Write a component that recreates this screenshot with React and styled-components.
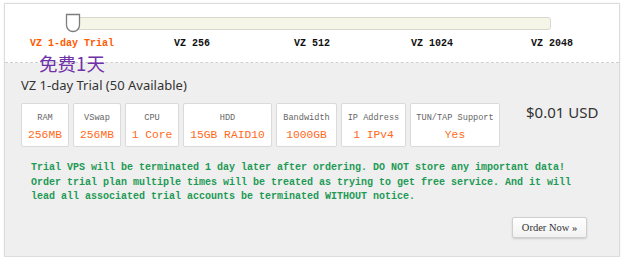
import React from "react";
import styled, { createGlobalStyle } from "styled-components";

const Global = createGlobalStyle`
  html, body { margin: 0; padding: 0; background: #fff; }
  body { font-family: "Noto Sans", "DejaVu Sans", sans-serif; }
`;

const Frame = styled.div`
  margin: 3px 0 0 4px;
  width: 614px;
  height: 252px;
  border: 1px solid #dcdcdc;
  box-shadow: 0 0 2px rgba(0,0,0,0.08);
  display: flex;
  flex-direction: column;
  background: #fff;
`;

const SliderArea = styled.div`
  height: 59px;
  flex: none;
  border-bottom: 1px dashed #cfcfcf;
  padding-top: 12px;
  box-sizing: border-box;
  position: relative;
  z-index: 1;
`;

const TrackWrap = styled.div`
  position: relative;
  margin-left: 67px;
  width: 479px;
  height: 19px;
`;

const Track = styled.div`
  position: absolute;
  left: 0;
  right: 0;
  top: 1px;
  height: 11px;
  background: #f5f5e8;
  border: 1px solid #d8d8cc;
  border-radius: 3px;
`;

const Handle = styled.svg`
  position: absolute;
  left: -7px;
  top: -3px;
`;

const Labels = styled.div`
  display: grid;
  grid-template-columns: repeat(5, 120px);
  margin-left: 7px;
  margin-top: 3px;
`;

const LabelCol = styled.div`
  display: flex;
  flex-direction: column;
  align-items: center;
`;

const StepLabel = styled.div`
  font-family: "Liberation Mono", "DejaVu Sans Mono", monospace;
  font-weight: bold;
  font-size: 10px;
  line-height: 12px;
  color: ${p => (p.$active ? "#ff5a00" : "#111")};
  white-space: nowrap;
`;

const Promo = styled.div`
  font-family: "Noto Sans CJK SC", sans-serif;
  font-size: 18.5px;
  line-height: 18px;
  color: #7030a8;
  margin-top: 4px;
`;

const Panel = styled.div`
  flex: 1;
  background: #efefef;
  padding: 14px 0 0 16px;
  display: flex;
  flex-direction: column;
`;

const Title = styled.div`
  font-size: 13px;
  line-height: 16px;
  color: #333;
`;

const SpecRow = styled.div`
  display: flex;
  align-items: flex-start;
  margin-top: 10px;
`;

const Boxes = styled.div`
  display: flex;
  gap: 4px;
`;

const Box = styled.div`
  width: ${p => p.$w}px;
  height: 44px;
  box-sizing: border-box;
  background: #fff;
  border: 1px solid #dadada;
  border-radius: 2px;
  display: flex;
  flex-direction: column;
  align-items: center;
  padding-top: 8px;
`;

const BoxLabel = styled.div`
  font-family: "Liberation Mono", "DejaVu Sans Mono", monospace;
  font-size: 8.6px;
  line-height: 12px;
  color: #666;
  white-space: nowrap;
`;

const BoxValue = styled.div`
  font-family: "Liberation Mono", "DejaVu Sans Mono", monospace;
  font-size: 11.3px;
  line-height: 14px;
  margin-top: 4px;
  color: #ff6a1a;
  white-space: nowrap;
`;

const Price = styled.div`
  margin-left: 26px;
  margin-top: 0;
  font-size: 15px;
  line-height: 18px;
  color: #333;
  white-space: nowrap;
`;

const Notice = styled.div`
  margin: 14px 0 0 10px;
  font-family: "Liberation Mono", "DejaVu Sans Mono", monospace;
  font-weight: bold;
  font-size: 10px;
  line-height: 14.5px;
  color: #1e9a55;
  white-space: pre;
`;

const Actions = styled.div`
  display: flex;
  justify-content: flex-end;
  padding-right: 32px;
  margin-top: 12px;
`;

const OrderButton = styled.button`
  width: 75px;
  height: 21px;
  border: 1px solid #cfcfcf;
  border-radius: 2px;
  background: linear-gradient(#ffffff, #f1f1f1);
  box-shadow: 0 1px 2px rgba(0,0,0,0.15);
  font-family: "Liberation Serif", serif;
  font-size: 10.5px;
  color: #333;
  padding: 0;
  cursor: pointer;
`;

const specs = [
  { label: "RAM", value: "256MB", w: 48 },
  { label: "VSwap", value: "256MB", w: 48 },
  { label: "CPU", value: "1 Core", w: 54 },
  { label: "HDD", value: "15GB RAID10", w: 89 },
  { label: "Bandwidth", value: "1000GB", w: 61 },
  { label: "IP Address", value: "1 IPv4", w: 65 },
  { label: "TUN/TAP Support", value: "Yes", w: 90 },
];

const steps = ["VZ 1-day Trial", "VZ 256", "VZ 512", "VZ 1024", "VZ 2048"];

export default function App() {
  return (
    <>
      <Global />
      <Frame>
        <SliderArea>
          <TrackWrap>
            <Track />
            <Handle width="16" height="20" viewBox="0 0 16 20">
              <path
                d="M1.5 1.5 H14.5 V12 C14.5 16 11.5 18.5 8 18.5 C4.5 18.5 1.5 16 1.5 12 Z"
                fill="#fff"
                stroke="#7d7d7d"
                strokeWidth="1.3"
              />
            </Handle>
          </TrackWrap>
          <Labels>
            {steps.map((s, i) => (
              <LabelCol key={s}>
                <StepLabel $active={i === 0}>{s}</StepLabel>
                {i === 0 && <Promo>免费1天</Promo>}
              </LabelCol>
            ))}
          </Labels>
        </SliderArea>
        <Panel>
          <Title>VZ 1-day Trial (50 Available)</Title>
          <SpecRow>
            <Boxes>
              {specs.map(s => (
                <Box key={s.label} $w={s.w}>
                  <BoxLabel>{s.label}</BoxLabel>
                  <BoxValue>{s.value}</BoxValue>
                </Box>
              ))}
            </Boxes>
            <Price>$0.01 USD</Price>
          </SpecRow>
          <Notice>{`Trial VPS will be terminated 1 day later after ordering. DO NOT store any important data!
Order trial plan multiple times will be treated as trying to get free service. And it will
lead all associated trial accounts be terminated WITHOUT notice.`}</Notice>
          <Actions>
            <OrderButton>Order Now »</OrderButton>
          </Actions>
        </Panel>
      </Frame>
    </>
  );
}
